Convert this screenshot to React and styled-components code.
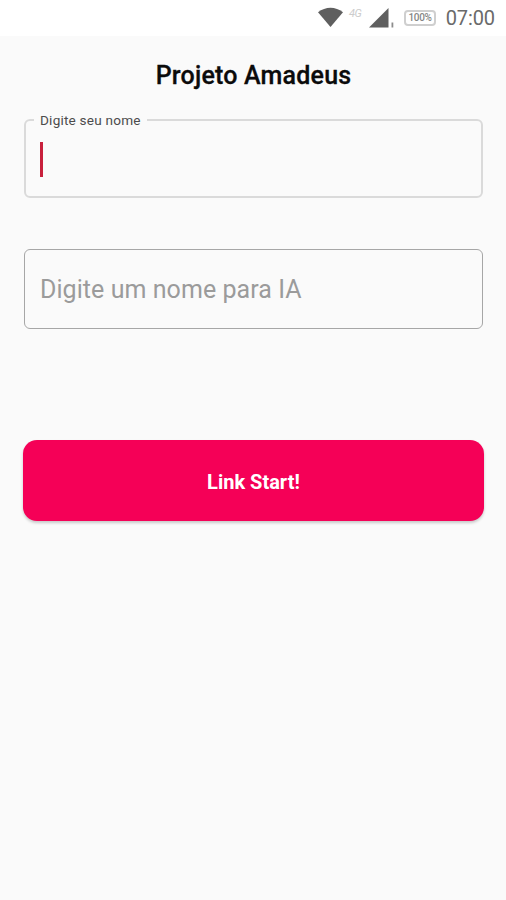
import React from "react";
import styled, { createGlobalStyle } from "styled-components";

const GlobalStyle = createGlobalStyle`
  *, *::before, *::after { box-sizing: border-box; }
  body { margin: 0; background: #fafafa; font-family: Roboto, sans-serif; }
`;

const Screen = styled.div`
  width: 100%;
  height: 900px;
  display: flex;
  flex-direction: column;
  background: #fafafa;
  overflow: hidden;
`;

const StatusBar = styled.header`
  height: 36px;
  flex: none;
  display: flex;
  align-items: center;
  padding: 0 11px 0 318px;
  background: #fff;
`;

const WifiIcon = styled.svg`
  width: 25px;
  height: 21px;
  margin-top: -1px;
`;

const NetworkLabel = styled.span`
  width: 16px;
  margin: -9px 0 0 6px;
  font-size: 11px;
  line-height: 12px;
  letter-spacing: -0.4px;
  font-style: italic;
  color: #cccccc;
`;

const SignalIcon = styled.svg`
  width: 27px;
  height: 22px;
  margin: -1px 0 0 4px;
`;

const Battery = styled.span`
  width: 32px;
  height: 16px;
  margin: -1px 0 0 8px;
  display: flex;
  align-items: center;
  justify-content: center;
  border: 2px solid #cfcfcf;
  border-radius: 4px;
  font-size: 10px;
  font-weight: 500;
  letter-spacing: -0.3px;
  color: #858585;
`;

const Clock = styled.time`
  margin-left: auto;
  font-size: 20px;
  line-height: 24px;
  letter-spacing: -0.1px;
  color: #6a6a6a;
`;

const Content = styled.main`
  display: flex;
  flex-direction: column;
  padding: 25px 23px 0 24px;
`;

const Title = styled.h1`
  margin: 0 0 21px;
  font-size: 25px;
  line-height: 30px;
  letter-spacing: 0.2px;
  font-weight: 500;
  text-align: center;
  color: #0b0b0b;
  -webkit-text-stroke: 0.3px #0b0b0b;
`;

const Field = styled.fieldset`
  height: ${(p) => (p.$active ? 86 : 80)}px;
  min-width: 0;
  margin: 0 0 ${(p) => (p.$active ? 51 : 111)}px;
  padding: ${(p) => (p.$active ? "15px 14px 0" : "24px 15px 0")};
  border: ${(p) => (p.$active ? "2px solid #dadada" : "1px solid #a6a6a6")};
  border-radius: 6px;
`;

const FieldLabel = styled.legend`
  height: 15px;
  margin-left: -6px;
  padding: 0 6px;
  font-size: 13.6px;
  line-height: 17px;
  letter-spacing: 0.2px;
  color: #4c4c4c;
`;

const Caret = styled.span`
  display: block;
  width: 3px;
  height: 35px;
  background: #c8203c;
`;

const Placeholder = styled.span`
  display: block;
  font-size: 25px;
  line-height: 32px;
  letter-spacing: 0.06px;
  color: #9b9b9b;
`;

const StartButton = styled.button`
  height: 81px;
  margin: 0 -1px;
  padding: 3px 0 0;
  border: 0;
  border-radius: 14px;
  background: #f50057;
  box-shadow: 0 2px 3px rgba(0, 0, 0, 0.2);
  color: #fff;
  font: 700 20px/24px Roboto, sans-serif;
`;

export default function App() {
  return (
    <Screen>
      <GlobalStyle />
      <StatusBar>
        <WifiIcon viewBox="0 0 25 21">
          <path d="M0 5.2C7.5-.8 17.5-.8 25 5.2L12.5 20Z" fill="#5f5f5f" />
        </WifiIcon>
        <NetworkLabel>4G</NetworkLabel>
        <SignalIcon viewBox="0 0 27 22">
          <path d="M0 20.5 19.5 1v19.5Z" fill="#5f5f5f" />
          <path d="M22.5 15.5h1.8v5h-1.8Z" fill="#8c8c8c" />
        </SignalIcon>
        <Battery>100%</Battery>
        <Clock>07:00</Clock>
      </StatusBar>
      <Content>
        <Title>Projeto Amadeus</Title>
        <Field $active>
          <FieldLabel>Digite seu nome</FieldLabel>
          <Caret />
        </Field>
        <Field>
          <Placeholder>Digite um nome para IA</Placeholder>
        </Field>
        <StartButton>Link Start!</StartButton>
      </Content>
    </Screen>
  );
}
